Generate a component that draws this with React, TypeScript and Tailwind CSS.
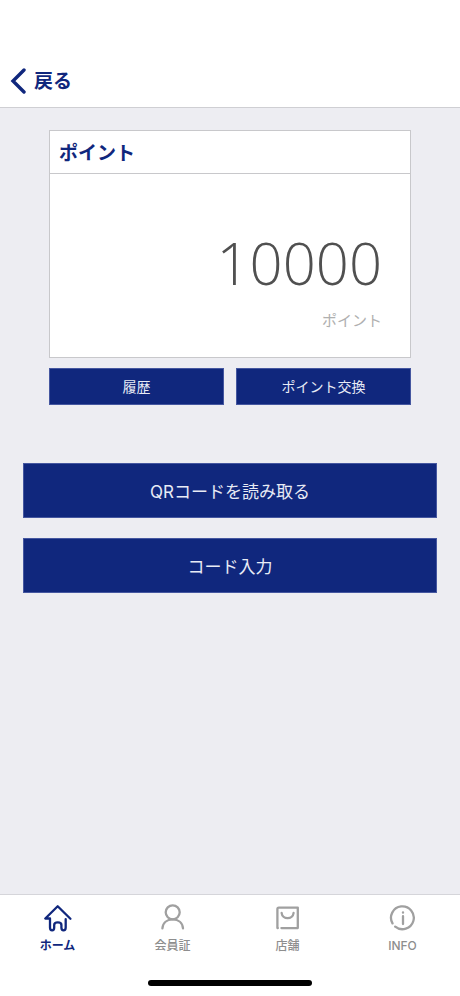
import type { ReactNode } from 'react';

interface Tab {
  id: string;
  label: string;
  icon: ReactNode;
}

const tabs: Tab[] = [
  {
    id: 'home',
    label: 'ホーム',
    icon: (
      <path d="M26.4 14.7 13.7 2.3 1.3 14.5H6V23.5C6 27.3 10.2 27.3 10.2 23.5V21C10.2 17.6 17.4 17.6 17.4 21V23.5C17.4 27.3 21.7 27.3 21.7 23.5V15.2" />
    ),
  },
  {
    id: 'member',
    label: '会員証',
    icon: (
      <>
        <circle cx="13.7" cy="8.3" r="7" />
        <path d="M3.4 24.4C3.8 18.8 8 15.4 13.7 15.4S23.6 18.8 24 24.4" />
      </>
    ),
  },
  {
    id: 'shop',
    label: '店舗',
    icon: (
      <>
        <path d="M3.9 24.1H3.4V5Q3.4 3.6 4.8 3.6H23.8V24.1H7.4" />
        <path d="M7.6 8.8C8.4 16 18.8 16 19.6 8.8" />
      </>
    ),
  },
  {
    id: 'info',
    label: 'INFO',
    icon: (
      <>
        <path d="M3.5 19.4A11.4 11.4 0 1 1 6.2 22.6" />
        <path d="M14 12.2V20M14 8.3V8.7" />
      </>
    ),
  },
];

function Header() {
  return (
    <header className="border-b border-[#cfcfd3] bg-white pt-[54px]">
      <button type="button" className="flex h-[53px] items-center gap-2 px-[10px] text-[19px] font-bold text-[#10277d]">
        <svg className="h-7 w-4" viewBox="0 0 16 28" fill="none" stroke="currentColor" strokeWidth="3.4" strokeLinecap="round" aria-hidden="true">
          <path d="M14 3 3 14 14 25" />
        </svg>
        <span className="pt-1">戻る</span>
      </button>
    </header>
  );
}

function PointCard({ points }: { points: number }) {
  return (
    <section className="border border-[#c8c8cb] bg-white">
      <h1 className="border-b border-[#c8c8cb] px-[9px] pt-1 text-[19px] leading-[38px] font-bold text-[#10277d]">ポイント</h1>
      <div className="px-7 pt-[53px] pb-6 text-right">
        <p className="font-['Open_Sans',sans-serif] text-[58px] leading-[72px] font-[350] text-[#505050]">{points}</p>
        <p className="pt-[10px] text-[15px] leading-[24px] text-[#b0b0b0]">ポイント</p>
      </div>
    </section>
  );
}

function TabBar({ active }: { active: string }) {
  return (
    <footer className="border-t border-[#d5d5da] bg-white pb-[10px]">
      <nav className="grid grid-cols-4 pt-[9px]">
        {tabs.map((tab) => (
          <a
            key={tab.id}
            href={`#${tab.id}`}
            className={`flex flex-col items-center gap-1 ${tab.id === active ? 'font-bold text-[#10277d]' : 'font-medium text-[#8e8e8e]'}`}
          >
            <svg
              className={`h-7 w-7 ${tab.id === active ? '' : 'text-[#a0a0a0]'}`}
              viewBox="0 0 28 28"
              fill="none"
              stroke="currentColor"
              strokeWidth="2.3"
              strokeLinecap="round"
              strokeLinejoin="round"
              aria-hidden="true"
            >
              {tab.icon}
            </svg>
            <span className="text-[12px] leading-[20px]">{tab.label}</span>
          </a>
        ))}
      </nav>
      <div className="mx-auto mt-6 h-[6px] w-[164px] rounded-full bg-black" />
    </footer>
  );
}

export default function App() {
  return (
    <div className="flex min-h-screen flex-col bg-[#ededf2] font-[Inter,'Noto_Sans_CJK_JP',sans-serif]">
      <Header />
      <main className="flex-1 px-[23px] pt-[22px]">
        <div className="px-[26px]">
          <PointCard points={10000} />
          <div className="mt-[10px] grid grid-cols-2 gap-3 text-[14px] text-[#e8ebf5]">
            <button type="button" className="h-[37px] border border-[#4557a0] bg-[#10277d]">履歴</button>
            <button type="button" className="h-[37px] border border-[#4557a0] bg-[#10277d]">ポイント交換</button>
          </div>
        </div>
        <div className="mt-[58px] flex flex-col gap-5 text-[17px] text-[#e8ebf5]">
          <button type="button" className="h-[55px] border border-[#4557a0] bg-[#10277d] pt-1">QRコードを読み取る</button>
          <button type="button" className="h-[55px] border border-[#4557a0] bg-[#10277d] pt-1">コード入力</button>
        </div>
      </main>
      <TabBar active="home" />
    </div>
  );
}
